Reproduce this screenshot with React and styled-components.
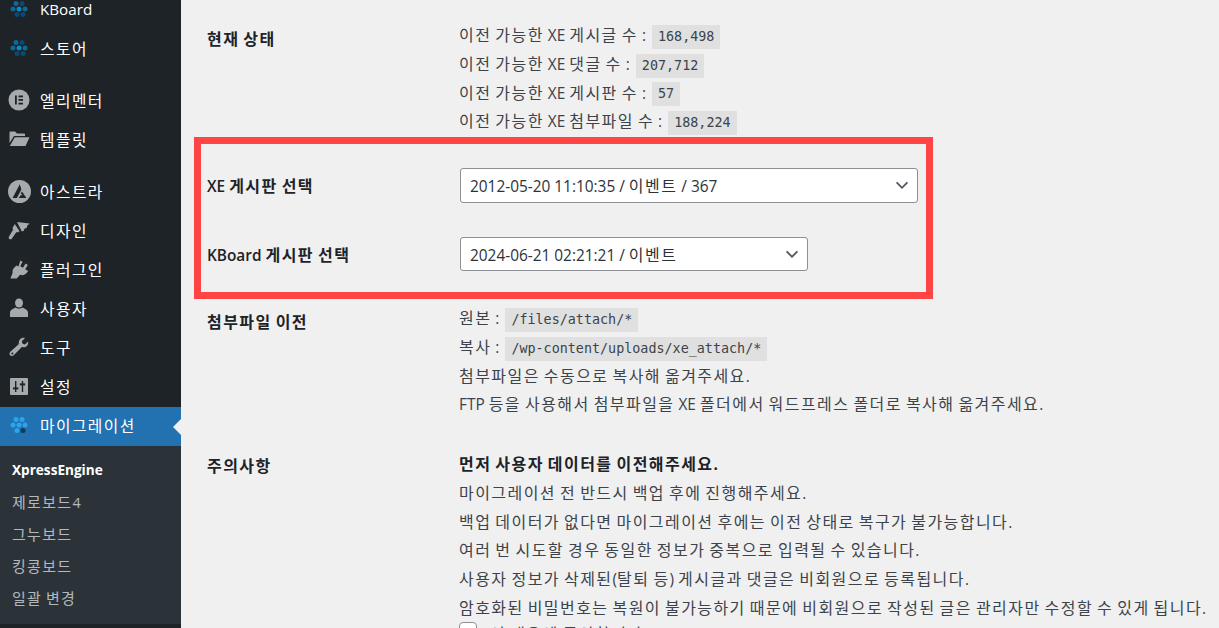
import React from 'react';
import styled, {createGlobalStyle} from "styled-components";

const GlobalStyle = createGlobalStyle`
  html, body {
    margin: 0;
    height: 100%;
    overflow: hidden;
    background: #f0f0f1;
  }
  body {
    font-family: "Open Sans", "Noto Sans CJK KR", sans-serif;
    font-size: 15.4px;
    color: #3c434a;
  }
`

const T = ({children}) => String(children).split(/([가-힣]+)/).map((part, i) => (
    i % 2 ? <Ko key={i}>{part}</Ko> : part
))

const DotsIcon = ({active}) => {
    const dots = [[6, 2.5], [12, 2.5], [3, 8], [9, 8], [15, 8], [7, 13.5], [13, 13.5]]
    const color = (i) => {
        if (active) return i === 6 ? "#123a5c" : "#2aa5ea"
        if (i === 3) return "#0f86c4"
        return i > 4 || i === 1 ? "#0a4a70" : "#0b6a9c"
    }
    return (
        <svg width="18" height="16" viewBox="0 0 18 16">
            {dots.map(([x, y], i) => <circle key={i} cx={x} cy={y} r="2.5" fill={color(i)}/>)}
        </svg>
    )
}

const ElementorIcon = () => (
    <svg width="22" height="22" viewBox="0 0 22 22">
        <circle cx="11" cy="11" r="10.5" fill="#a7aaad"/>
        <rect x="7" y="6.5" width="1.8" height="9" fill="#1d2327"/>
        <rect x="10.5" y="6.5" width="4.5" height="1.8" fill="#1d2327"/>
        <rect x="10.5" y="10" width="4.5" height="1.8" fill="#1d2327"/>
        <rect x="10.5" y="13.7" width="4.5" height="1.8" fill="#1d2327"/>
    </svg>
)

const FolderIcon = () => (
    <svg width="21" height="16" viewBox="0 0 21 16">
        <path d="M0.5 1.5 C0.5 0.8 1 0.5 1.5 0.5 H6 L8 2.5 H15 C15.6 2.5 16 2.9 16 3.5 V5 H5 L0.5 12 Z" fill="#a7aaad"/>
        <path d="M5.8 6.2 H20.5 L16.5 15 H0.8 Z" fill="#a7aaad"/>
    </svg>
)

const AstraIcon = () => (
    <svg width="23" height="23" viewBox="0 0 23 23">
        <circle cx="11.5" cy="11.5" r="11.5" fill="#a7aaad"/>
        <path d="M11.8 4.2 L4.6 18 H8.8 L13.4 9.4 Z M14 11.4 L18.4 18 H10.8 L12.6 15.2 H14.6 L12.8 13.4 Z" fill="#1d2327"/>
    </svg>
)

const BrushIcon = () => (
    <svg width="22" height="19" viewBox="0 0 22 19">
        <path d="M9 1 L21.6 2.6 L19.2 4.8 L18.8 6.8 L16.4 7.8 L15.8 9.8 L13.8 10.6 Z" fill="#a7aaad"/>
        <path d="M6.8 3 L11.6 10.2 L9.4 11.6 L8.4 11 L3.6 18 C2.2 19 .2 17.6 .8 16 L5.2 8.6 L4.4 7.2 Z" fill="#a7aaad"/>
    </svg>
)

const PlugIcon = () => (
    <svg width="19" height="19" viewBox="0 0 19 19">
        <path d="M10.4 .6 L12.6 1.8 L10.2 6.2 L13 7.8 L15.6 3.6 L17.8 5 L15.2 9.2 L18.2 11 L17 12.6 C15 15 12.6 15.6 10.2 14.8 L6.6 18.6 L.4 18.6 L2.6 13 C2.2 10.4 3 8.4 5.4 6.6 L6.4 5.6 L8.4 6.6 Z" fill="#a7aaad"/>
    </svg>
)

const UserIcon = () => (
    <svg width="20" height="20" viewBox="0 0 20 20">
        <ellipse cx="10" cy="5" rx="4" ry="4.6" fill="#a7aaad"/>
        <path d="M1 19 V14.6 C1 12.4 4 10.6 6.6 9.6 C8 11 12 11 13.4 9.6 C16 10.6 19 12.4 19 14.6 V19 Z" fill="#a7aaad"/>
    </svg>
)

const WrenchIcon = () => (
    <svg width="20" height="20" viewBox="0 0 20 20">
        <path d="M19 4.4 C19.8 7.4 17.6 10.6 14 10.2 C13.2 10.1 12.8 10 12.4 10.4 L5 18 C3.8 19.4 1.8 19.2 1 18.2 C.2 17.2 .4 15.6 1.6 14.6 L9.4 7.4 C9.8 7 9.8 6.6 9.8 5.8 C9.6 2.4 12.8 0 16 1 L12.8 4.2 L13.6 6.8 L16 7.4 Z" fill="#a7aaad"/>
        <circle cx="3.4" cy="16.6" r="1" fill="#1d2327"/>
    </svg>
)

const SlidersIcon = () => (
    <svg width="18" height="17" viewBox="0 0 18 17">
        <rect width="18" height="17" rx="1" fill="#a7aaad"/>
        <rect x="5" y="3" width="1.4" height="11" fill="#1d2327"/>
        <rect x="3" y="9.4" width="5.4" height="2" fill="#1d2327"/>
        <rect x="11.8" y="3" width="1.4" height="11" fill="#1d2327"/>
        <rect x="9.8" y="5.4" width="5.4" height="2" fill="#1d2327"/>
    </svg>
)

const Chevron = () => (
    <svg width="16" height="16" viewBox="0 0 16 16">
        <path d="M2.6 5.4 L8 10.8 L13.4 5.4" fill="none" stroke="#50575e" strokeWidth="1.8"/>
    </svg>
)

const menu = [
    {label: "KBoard", icon: <DotsIcon/>},
    {label: "스토어", icon: <DotsIcon/>},
    {gap: true},
    {label: "엘리멘터", icon: <ElementorIcon/>},
    {label: "템플릿", icon: <FolderIcon/>},
    {gap: true},
    {label: "아스트라", icon: <AstraIcon/>},
    {label: "디자인", icon: <BrushIcon/>},
    {label: "플러그인", icon: <PlugIcon/>},
    {label: "사용자", icon: <UserIcon/>},
    {label: "도구", icon: <WrenchIcon/>},
    {label: "설정", icon: <SlidersIcon/>},
]

const subMenu = ["XpressEngine", "제로보드4", "그누보드", "킹콩보드", "일괄 변경"]

const App = () => {
    return (
        <>
            <GlobalStyle/>
            <Page>
                <Sidebar>
                    {menu.map((item, i) => item.gap ? <MenuGap key={i}/> : (
                        <MenuItem key={i}>
                            <IconSlot>{item.icon}</IconSlot>
                            <span><T>{item.label}</T></span>
                        </MenuItem>
                    ))}
                    <MenuItem $active>
                        <IconSlot><DotsIcon active/></IconSlot>
                        <span><T>마이그레이션</T></span>
                    </MenuItem>
                    <SubMenu>
                        {subMenu.map((label, i) => <SubItem key={label} $current={i === 0}><T>{label}</T></SubItem>)}
                    </SubMenu>
                </Sidebar>
                <Main>
                    <Row $top={21} $bottom={1}>
                        <Label $offset={8}><T>현재 상태</T></Label>
                        <Value>
                            <Line><T>이전 가능한 XE 게시글 수 :</T><Code>168,498</Code></Line>
                            <Line><T>이전 가능한 XE 댓글 수 :</T><Code>207,712</Code></Line>
                            <Line><T>이전 가능한 XE 게시판 수 :</T><Code>57</Code></Line>
                            <Line><T>이전 가능한 XE 첨부파일 수 :</T><Code>188,224</Code></Line>
                        </Value>
                    </Row>
                    <Highlight>
                        <SelectRow>
                            <SelectLabel><T>XE 게시판 선택</T></SelectLabel>
                            <FakeSelect $width={458} $height={35}>
                                <span><T>2012-05-20 11:10:35 / 이벤트 / 367</T></span>
                                <Chevron/>
                            </FakeSelect>
                        </SelectRow>
                        <SelectRow>
                            <SelectLabel><T>KBoard 게시판 선택</T></SelectLabel>
                            <FakeSelect $width={348} $height={34}>
                                <span><T>2024-06-21 02:21:21 / 이벤트</T></span>
                                <Chevron/>
                            </FakeSelect>
                        </SelectRow>
                    </Highlight>
                    <Row $top={5} $bottom={31}>
                        <Label $offset={8}><T>첨부파일 이전</T></Label>
                        <Value>
                            <Line><T>원본 :</T><Code>/files/attach/*</Code></Line>
                            <Line><T>복사 :</T><Code>/wp-content/uploads/xe_attach/*</Code></Line>
                            <Line><T>첨부파일은 수동으로 복사해 옮겨주세요.</T></Line>
                            <Line><T>FTP 등을 사용해서 첨부파일을 XE 폴더에서 워드프레스 폴더로 복사해 옮겨주세요.</T></Line>
                        </Value>
                    </Row>
                    <Row>
                        <Label $offset={6}><T>주의사항</T></Label>
                        <Value>
                            <Line><strong><T>먼저 사용자 데이터를 이전해주세요.</T></strong></Line>
                            <Line><T>마이그레이션 전 반드시 백업 후에 진행해주세요.</T></Line>
                            <Line><T>백업 데이터가 없다면 마이그레이션 후에는 이전 상태로 복구가 불가능합니다.</T></Line>
                            <Line><T>여러 번 시도할 경우 동일한 정보가 중복으로 입력될 수 있습니다.</T></Line>
                            <Line><T>사용자 정보가 삭제된(탈퇴 등) 게시글과 댓글은 비회원으로 등록됩니다.</T></Line>
                            <Line><T>암호화된 비밀번호는 복원이 불가능하기 때문에 비회원으로 작성된 글은 관리자만 수정할 수 있게 됩니다.</T></Line>
                            <AgreeLine><Checkbox/><T>이 내용에 동의합니다.</T></AgreeLine>
                        </Value>
                    </Row>
                </Main>
            </Page>
        </>
    );
};

const Ko = styled.span`
  font-size: 1.04em;
  letter-spacing: 0.09em;
`

const Page = styled.div`
  display: flex;
  height: 628px;
  overflow: hidden;
`

const Sidebar = styled.nav`
  width: 181px;
  flex: none;
  height: 660px;
  margin-top: -9px;
  background: #1d2327;
`

const MenuGap = styled.div`
  height: 13px;
`

const MenuItem = styled.div`
  position: relative;
  display: flex;
  align-items: center;
  height: 39px;
  box-sizing: border-box;
  padding-bottom: 3px;
  font-size: 15.2px;
  color: #fff;
  background: ${props => props.$active ? "#2271b1" : "transparent"};
  ${props => props.$active && `
    &::after {
      content: "";
      position: absolute;
      right: 0;
      top: 50%;
      margin-top: -8px;
      border: 8px solid transparent;
      border-right-color: #f0f0f1;
      border-left: 0;
    }
  `}
`

const IconSlot = styled.span`
  width: 38px;
  margin-right: 2px;
  display: flex;
  align-items: center;
  justify-content: center;
`

const SubMenu = styled.div`
  display: flex;
  flex-direction: column;
  background: #2c3338;
  padding: 8px 0 10px;
`

const SubItem = styled.div`
  height: 32px;
  line-height: 32px;
  padding-left: 12px;
  font-size: ${props => props.$current ? "13.6px" : "14.4px"};
  color: ${props => props.$current ? "#fff" : "rgba(240,246,252,0.7)"};
  font-weight: ${props => props.$current ? 700 : 400};
`

const Main = styled.main`
  flex: 1;
  min-width: 0;
  padding-left: 13px;
`

const Row = styled.div`
  display: flex;
  padding-top: ${props => props.$top || 0}px;
  padding-bottom: ${props => props.$bottom || 0}px;
`

const Label = styled.div`
  width: 252px;
  flex: none;
  padding-left: 13px;
  padding-top: ${props => props.$offset || 0}px;
  line-height: 20px;
  font-weight: 600;
  color: #1d2327;
`

const Value = styled.div`
  display: flex;
  flex-direction: column;
`

const Line = styled.div`
  height: 28.75px;
  line-height: 28.75px;
  white-space: pre;
  strong {
    color: #1d2327;
  }
`

const AgreeLine = styled(Line)`
  margin-top: -3px;
`

const Code = styled.code`
  display: inline-block;
  height: 24px;
  line-height: 24px;
  vertical-align: middle;
  margin-left: 6px;
  padding: 0 6px;
  background: #e0e0e0;
  font-family: "DejaVu Sans Mono", "Liberation Mono", monospace;
  font-size: 13.4px;
  color: #3c434a;
`

const Highlight = styled.section`
  width: 739px;
  height: 162px;
  box-sizing: border-box;
  border: 7px solid #ff4444;
  padding-top: 2px;
  display: flex;
  flex-direction: column;
  justify-content: center;
  gap: 34px;
`

const SelectRow = styled.div`
  display: flex;
  align-items: center;
`

const SelectLabel = styled.div`
  width: 259px;
  flex: none;
  padding-left: 6px;
  box-sizing: border-box;
  font-size: 15.4px;
  font-weight: 600;
  color: #1d2327;
`

const FakeSelect = styled.div`
  width: ${props => props.$width}px;
  height: ${props => props.$height}px;
  box-sizing: border-box;
  display: flex;
  align-items: center;
  justify-content: space-between;
  padding: 0 7px 0 9px;
  background: #fff;
  border: 1px solid #8c8f94;
  border-radius: 3px;
  color: #2c3338;
`

const Checkbox = styled.span`
  display: inline-block;
  width: 16px;
  height: 16px;
  margin-right: 13px;
  vertical-align: 0;
  background: #fff;
  border: 1px solid #8c8f94;
  border-radius: 4px;
`

export default App;
